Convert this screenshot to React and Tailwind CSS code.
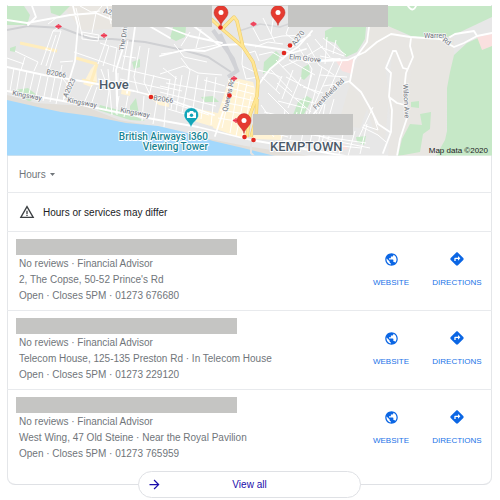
import React from "react";
import { MdPublic, MdDirections, MdArrowForward, MdWarningAmber } from "react-icons/md";

const offices = [
  { address: "2, The Copse, 50-52 Prince's Rd", phone: "01273 676680" },
  { address: "Telecom House, 125-135 Preston Rd · In Telecom House", phone: "01273 229120" },
  { address: "West Wing, 47 Old Steine · Near the Royal Pavilion", phone: "01273 765959" },
];

const stops = [[151, 97], [220.5, 27.5], [284, 53], [290, 45.5], [229.5, 95.5], [244.5, 137], [253.5, 140]];
const stations = [[58.5, 26.5], [104, 35.5], [253.5, 24], [234, 78.5], [236, 120.5]];
const pins = [[221, 13], [278, 13], [244, 121]];

function Pin({ x, y }) {
  return (
    <g transform={`translate(${x} ${y})`}>
      <path d="M0 12.500C-.8 7.500-7 4.500-7-.4A7 7 0 0 1 7-.4C7 4.500.8 7.500 0 12.500Z" fill="#e53b30" stroke="#b92b25" strokeWidth=".5" />
      <circle r="2.500" cy="-.4" fill="#fff" />
    </g>
  );
}

function Map() {
  return (
    <svg viewBox="7 5 485 151" className="block h-auto w-full" role="img" aria-label="Map of Hove and Kemptown" fontFamily="Roboto, sans-serif">
      <defs>
        <clipPath id="mapArea"><rect x="7" y="6" width="485" height="149.500" /></clipPath>
      </defs>
      <g clipPath="url(#mapArea)">
        <rect x="7" y="6" width="485" height="150" fill="#e7e7e7" />

        {/* Open ground east of the town */}
        <path d="M370 27L388 25L410 38L454 38V56L447 91L446 156H398L407 112L410 55L411 39L392 39L372 53L358 58L348 84L368 106L360 128L338 125L350 83Z" fill="#e8e6e2" />
        <path d="M358 58L392 36L411 39L413 55L407 112L398 156H388L391 125L388 98L392 53L385 65L389 96L385 140L374 132L366 106L348 84Z" fill="#e8e6e3" />
        <path d="M62 6H132L112 29L82 30Z" fill="#e9e6e1" />

        {/* Parks */}
        <g fill="#c6e8c7">
          <path d="M388 6H492V20L456 34L438 40L411 36L388 26Z" />
          <path d="M454 55L467 43L478 38L492 35V156H436L445 140L447 131L447 88L450 72Z" />
          <path d="M325 31L333 27H366L365 39L357 52L346 57L336 43L325 40Z" />
          <path d="M7 6H24L30 15L27 25H7Z" />
          <path d="M50 6H70L60 16L51 13Z" />
          <path d="M170 38L173 27H186L185 37L176 41Z" />
          <path d="M263 74L264 62L276 51L280 55L276 65Z" />
          <path d="M301 78L302 68L309 64L310 74L304 80Z" />
          <path d="M293 115L298 102L307 96L312 99L304 114Z" />
          <path d="M132 62L140 59V67L134 69Z" />
          <path d="M130 106L136 98L139 114H130Z" />
          <path d="M15 90L28 88L38 96L29 102Z" />
          <path d="M10 48L16 46L15 52L10 51Z" />
          <path d="M100 105L126 112L145 121L130 120L98 110Z" />
          <path d="M201 97L213 96L219 102H205Z" />
          <path d="M411 102L419 101V108L411 107Z" />
          <path d="M402 139L410 124L422 125L420 114L431 112L430 129L423 134L420 152L398 156Z" />
          <path d="M356 137L366 136L364 145L357 142Z" />
        </g>
        <path d="M456 34L492 17V33L477 36L464 43L454 47Z" fill="#e7e7e7" />
        <path d="M336 61L355 59L352 74L342 71Z M477 37L492 34V46L482 50Z M328 144L342 141L348 149L335 151Z" fill="#fae0df" />

        {/* Town centre blocks */}
        <g fill="#fff3d5">
          <path d="M230 77L253 82L257 94L250 118L247 140L213 128L222 101Z" />
          <path d="M194 108L222 114L214 127L187 119Z" />
          <path d="M91 69L96 63L97 82L91 87L83 84Z" />
          <path d="M144 93L168 97L169 107L159 105Z" />
          <path d="M253 130L285 132L281 140L252 139Z" />
          <path d="M122 88L131 90L130 96L121 94Z" />
        </g>
        <path d="M20 43L57 51M76 58L97 64M97 64L91 82M82 80L96 83" stroke="#ffedbd" strokeWidth="3" fill="none" />

        {/* Railway */}
        <path d="M7 30L28 26L62 28L91 39L112 39L145 42L183 50L208 57L231 72" stroke="#cfd0d3" strokeWidth="2" fill="none" />
        <path d="M213 30L233 59L237 71L228 77M220 34L238 72" stroke="#d1d2d6" strokeWidth="4" fill="none" />
        <path d="M239 31L260 24L280 27L300 20" stroke="#d4d5d7" strokeWidth="1.500" fill="none" />

        {/* Sea and beach */}
        <path d="M7 95L36 103L84 106L119 120L154 126L172 133L210 139L246 146L310 156H7Z" fill="#e2ded8" />
        <path d="M7 100L42 108L61 112L91 116L126 123L158 126L184 132L213 141L243 148L275 156H7Z" fill="#a3d8fc" />
        <path d="M251 139V153L254 156" stroke="#e3e3e3" strokeWidth="2" fill="none" />

        {/* Side streets */}
        <g stroke="#fff" strokeWidth="1" fill="none">
          <path d="M14 68L10 91M20 70L16 94M27 71L22 97M34 73L28 98M41 75L35 100M48 77L43 101M55 77L50 102M62 78L56 104M41 65L53 31L61 31L49 70M46 66L56 35M45 49L51 51M53 31L59 27M82 32L99 35L98 41L82 39ZM84 35L98 38M92 33L96 13L102 6M107 38L98 64M100 43L109 46L103 66M110 46L117 48L113 72M92 85L83 105M97 87L90 108M101 69L109 91L106 111M108 69L112 115M118 73L117 115M123 56L136 58M128 40L122 70M140 46L134 77L138 93M149 48L144 82L151 97M120 79L151 86L169 90M98 79L119 83M74 52L100 61L124 69L170 80M60 62L73 61M62 65L60 75L67 84L63 102M116 114L119 96M124 117L128 96M142 121L144 96M153 124L157 100M164 127L166 103M15 51L38 62L34 71M7 58L24 64M25 57L21 70M76 8L82 35M80 6L91 12L100 11M107 6L111 24M56 18L48 24M154 75L149 96" />
          <path d="M160 74L184 66L198 73L222 75M166 83L205 90L226 93M170 79L166 103M176 76L171 109M182 75L176 111M190 70L182 113M198 75L192 115M207 77L201 119M216 77L211 125M160 92L216 106M160 99L209 115M168 109L198 118M160 86L182 91M204 80L225 86M161 54L191 50L221 44M174 44L184 57L207 62M190 32L181 46M201 29L196 48M181 58L190 70M163 68L177 79M228 80L254 87M226 87L254 94M225 94L255 101M222 102L253 108M220 110L251 115M218 118L248 123M233 79L222 128M239 81L230 133M247 83L236 136M251 96L242 137M243 48L242 64L246 79L258 77M246 54L255 51L259 61M242 66L257 73M253 28L260 41L282 36L305 35M263 18L275 42M275 6L271 34M290 23L286 34L298 43M255 47L268 42L283 44M259 55L272 52L284 59M258 70L274 74L282 78M262 77L280 94M270 69L292 92M276 60L301 86M282 67L305 57L323 46M289 60L315 75M291 54L306 62M299 48L312 69L308 89M307 43L319 65L334 75M315 39L330 57M323 38L346 55M286 77L319 94M277 83L311 112M268 93L299 124M261 105L280 132M258 116L274 137M282 76L276 90M293 70L282 99M301 77L288 108M312 74L300 115M322 67L309 114M334 61L314 105M342 61L318 116M303 87L323 93M295 98L314 103M278 101L305 108M264 112L286 117M258 124L275 127M259 129L288 137M285 110L281 140M297 112L290 139M307 111L301 143M317 112L309 147M325 104L318 146M334 99L322 142M320 75L332 76L347 77M320 47L344 56M320 56L340 60M323 86L344 83M327 37L325 64M336 40L333 54M310 133L335 141L370 148M283 140L361 148M329 136L325 151M343 134L339 154M355 131L348 156M362 127L378 135L386 142M373 107L359 137M371 108L378 130L363 125M367 124L360 154M280 128L312 135L366 143" />
        </g>

        {/* Main streets */}
        <g stroke="#fff" strokeWidth="1.800" fill="none" strokeLinecap="round" strokeLinejoin="round">
          <path d="M7 67L44 75L87 82L134 91L173 101L214 115M7 91L63 101L111 111L153 119L198 127L251 140L310 150L345 156M7 20L27 23L70 15L96 13L122 24L139 20L170 38M28 25L36 17L32 6M73 6L78 26L75 61L64 98M125 29L123 48L116 70L117 106M135 27L130 63L127 93M160 56L184 50L205 51L223 45L244 44L286 50L306 62L340 59M158 24L190 36L222 43M188 22L199 30L219 45M306 49L288 54L270 69L259 84M310 35L290 48M230 82L224 109L215 136M312 31L298 47L287 54M320 61L348 60L365 52L377 42L391 34L410 37L440 39L454 47L464 43L477 36L492 33M369 27L367 42L354 60L350 81L336 85L322 103L310 119M350 82L361 92L370 108L378 124L390 132M411 38L410 46L413 57L406 73L405 82L407 118L400 139L397 156M393 51L386 68L391 73L389 96L392 110L391 132L383 153M393 51H396L403 68M403 68L407 69M389 97L397 103L405 105M450 37L455 34L474 31L477 36" />
          <path d="M408 6Q413 13 416 6" />
        </g>

        {/* A23 */}
        <g fill="none" strokeLinejoin="round">
          <path d="M209 17L222 29L243 47L253 62L258 81L257 96L250 115L247 137M222 29L234 17L237 21L243 47M251 137L256 119L257 99" stroke="#efcf70" strokeWidth="3.500" />
          <path d="M209 17L222 29L243 47L253 62L258 81L257 96L250 115L247 137M222 29L234 17L237 21L243 47M251 137L256 119L257 99" stroke="#ffe693" strokeWidth="2.300" />
        </g>

        {/* Labels */}
        <g fontSize="7" fill="#6b7178" stroke="#f8f8f8" strokeWidth="1.500" strokeLinejoin="round" paintOrder="stroke">
          <text x="46" y="74" transform="rotate(11 46 74)">B2066</text>
          <text x="67" y="98" transform="rotate(-65 67 98)">A2023</text>
          <text x="12" y="95" transform="rotate(11 12 95)">Kingsway</text>
          <text x="67" y="102" transform="rotate(11 67 102)">Kingsway</text>
          <text x="120" y="112" transform="rotate(11 120 112)">Kingsway</text>
          <text x="124" y="51" transform="rotate(-82 124 51)">The Drive</text>
          <text x="103" y="13" transform="rotate(12 103 13)">A27</text>
          <text x="153" y="100" transform="rotate(9 153 100)">B2066</text>
          <text x="227" y="112" transform="rotate(-77 227 112)">Queens Rd</text>
          <text x="295" y="46" transform="rotate(-53 295 46)">A270</text>
          <text x="289" y="59" transform="rotate(6 289 59)">Elm Grove</text>
          <text x="316" y="110" transform="rotate(-45 316 110)">Freshfield Rd</text>
          <text x="403" y="84" transform="rotate(87 403 84)">Wilson Ave</text>
          <text x="424" y="38">Warren</text>
          <text x="442" y="41" transform="rotate(35 442 41)">Rd</text>
        </g>
        <g strokeLinejoin="round" paintOrder="stroke" stroke="#fff" strokeWidth="2" fontWeight="500">
          <text x="99" y="89" fontSize="13" fill="#4d5b6a">Hove</text>
          <text x="270" y="151" fontSize="13" fill="#4d5b6a">KEMPTOWN</text>
          <text x="208" y="140" textAnchor="end" fontSize="10" fill="#168494">British Airways i360</text>
          <text x="208" y="150" textAnchor="end" fontSize="10" fill="#168494">Viewing Tower</text>
        </g>
        <text x="488" y="153" textAnchor="end" fontSize="8" fill="#222" fontFamily="Liberation Sans, sans-serif">Map data ©2020</text>

        {/* Stations, stops and pins */}
        {stations.map(([x, y]) => (
          <g key={x} transform={`translate(${x} ${y})`}>
            <path d="M-3.500 0L0-2.500L3.500 0L0 2.500Z" fill="#ed3650" />
            <path d="M-2.500-1H2.500M-2.500 1H2.500" stroke="#f47b88" strokeWidth=".5" />
          </g>
        ))}
        <path d="M191 128C190 122 184 120 184 115A7.300 7.300 0 0 1 198.600 115C198.600 120 192 122 191 128Z" fill="#12a5b8" stroke="#fff" strokeWidth=".5" />
        <path d="M187 112.500H189L190 111H193L194 112.500H196V118H187Z" fill="#fff" />
        <circle cx="191.500" cy="115.200" r="1.700" fill="#12a5b8" />
        {pins.map(([x, y]) => <Pin key={x} x={x} y={y} />)}
        {stops.map(([x, y]) => <circle key={x} cx={x} cy={y} r="2.300" fill="#e2281f" />)}
      </g>
      <path d="M112 5H212V27H112ZM288 5H388V27H288ZM253 114H353V135H253Z" fill="#c5c5c3" />
      <path d="M212 5H288V6H212Z" fill="#d5d5d3" />
    </svg>
  );
}

function Action({ icon: Icon, label, size, width }) {
  return (
    <a href="#" className={`flex flex-col items-center gap-2 text-[8px] leading-4 text-[#1a73e8] ${width}`}>
      <span className="flex h-4 items-center text-[#0b66e4]"><Icon size={size} aria-hidden="true" /></span>
      {label}
    </a>
  );
}

function Office({ address, phone }) {
  return (
    <li className="flex h-[79px] items-start justify-between border-t border-[#e8eaed] px-[9px]">
      <div className="min-w-0 pt-[7px] text-[10px] leading-4 text-[#70757a]">
        <div className="h-4 w-[221px] bg-[#c5c5c3]" />
        <div className="pt-px pl-[3px]">
          <p>No reviews · Financial Advisor</p>
          <p>{address}</p>
          <p>Open · Closes 5PM · {phone}</p>
        </div>
      </div>
      <div className="flex shrink-0 gap-5 pt-[19px]">
        <Action icon={MdPublic} label="WEBSITE" size={15} width="w-10" />
        <Action icon={MdDirections} label="DIRECTIONS" size={16} width="w-[52px]" />
      </div>
    </li>
  );
}

export default function App() {
  return (
    <main className="bg-white pt-[5px] pr-2 pb-[2px] pl-[7px] font-['Liberation_Sans',Arial,sans-serif] text-[10px]">
      <section className="relative rounded-b-lg border-b border-[#dfe1e5] pb-4 shadow-[inset_1px_0_#e4e6e9,inset_-1px_0_#e4e6e9]">
        <Map />
        <div className="flex h-9 items-center px-3">
          <button type="button" className="flex items-center gap-1 text-[#70757a]">
            Hours
            <svg width="5" height="3" viewBox="0 0 5 3" aria-hidden="true"><path d="M0 0H5L2.500 3Z" fill="currentColor" /></svg>
          </button>
        </div>
        <div className="flex h-[39px] items-center gap-2 border-t border-[#e8eaed] px-3 text-[#202124]">
          <MdWarningAmber size={16} className="text-[#3c4043]" aria-hidden="true" />
          Hours or services may differ
        </div>
        <ul>
          {offices.map((office) => <Office key={office.phone} {...office} />)}
        </ul>
      </section>
      <div className="relative -mt-[14px] flex justify-center">
        <button type="button" className="relative flex h-[27px] w-[223px] items-center justify-center rounded-full border border-[#dfe1e5] bg-white text-[#1a0dab]">
          <MdArrowForward size={15} className="absolute left-2" aria-hidden="true" />
          View all
        </button>
      </div>
    </main>
  );
}
